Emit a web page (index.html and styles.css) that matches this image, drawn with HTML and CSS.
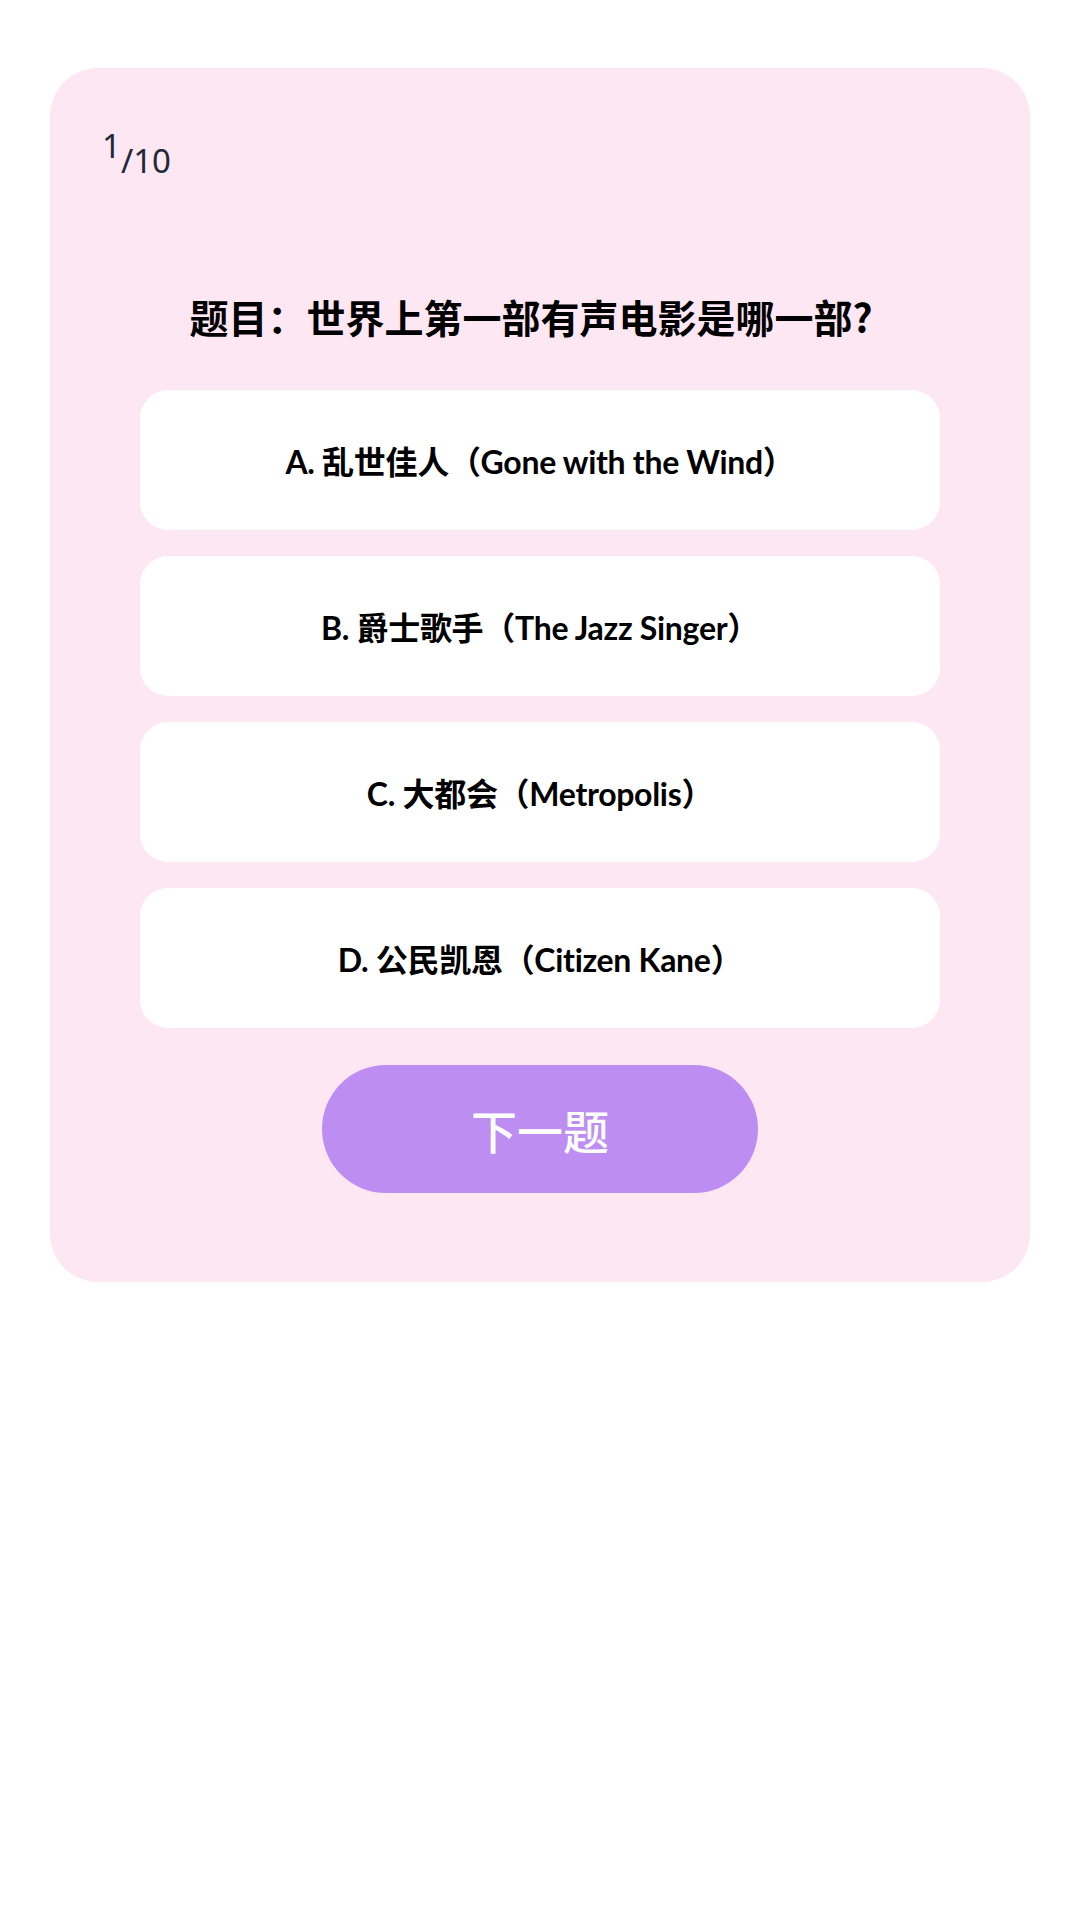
FILE: index.html
```html
<!DOCTYPE html>
<html lang="zh-CN">
  <head>
    <meta charset="UTF-8" />
    <title>电影知识问答</title>
    <link rel="stylesheet" href="styles.css">
  </head>
  <body>
    <div class="quiz-card">
      <div class="progress"><span class="current">1</span>/10</div>

      <h2 class="question">题目：世界上第一部有声电影是哪一部?</h2>

      <div class="options">
        <div class="option">A. 乱世佳人（Gone with the Wind）</div>
        <div class="option">B. 爵士歌手（The Jazz Singer）</div>
        <div class="option">C. 大都会（Metropolis）</div>
        <div class="option">D. 公民凯恩（Citizen Kane）</div>
      </div>

      <button class="next-btn">下一题</button>
    </div>
  </body>
</html>
```

FILE: styles.css
```css
body {
  margin: 0;
  background-color: #ffffff;
  font-family: Lato, "Noto Sans CJK SC", sans-serif;
  color: #000000;
}

.quiz-card {
  margin: 68px 50px 0;
  padding: 0 0 89px;
  background-color: #fce7f3;
  border-radius: 48px;
  display: flex;
  flex-direction: column;
  align-items: center;
}

.progress {
  align-self: flex-start;
  padding: 58px 0 0 52px;
  font-family: "Noto Sans", sans-serif;
  font-size: 33px;
  line-height: 40px;
  color: #1f2937;
}

.progress .current {
  vertical-align: 15px;
}

.question {
  margin: 111px 0 50px;
  padding-right: 18px;
  font-family: "Noto Sans CJK SC", sans-serif;
  font-size: 39px;
  line-height: 48px;
  font-weight: 700;
}

.options {
  display: flex;
  flex-direction: column;
  gap: 26px;
}

.option {
  width: 800px;
  height: 140px;
  background-color: #ffffff;
  border-radius: 28px;
  display: flex;
  align-items: center;
  justify-content: center;
  font-size: 32px;
  font-weight: 700;
  letter-spacing: -0.3px;
}

.next-btn {
  margin-top: 37px;
  width: 436px;
  height: 128px;
  border: none;
  border-radius: 64px;
  background-color: #bd8df1;
  color: #ffffff;
  font-family: "Noto Sans CJK SC", sans-serif;
  font-size: 46px;
  font-weight: 500;
  cursor: pointer;
}
```
